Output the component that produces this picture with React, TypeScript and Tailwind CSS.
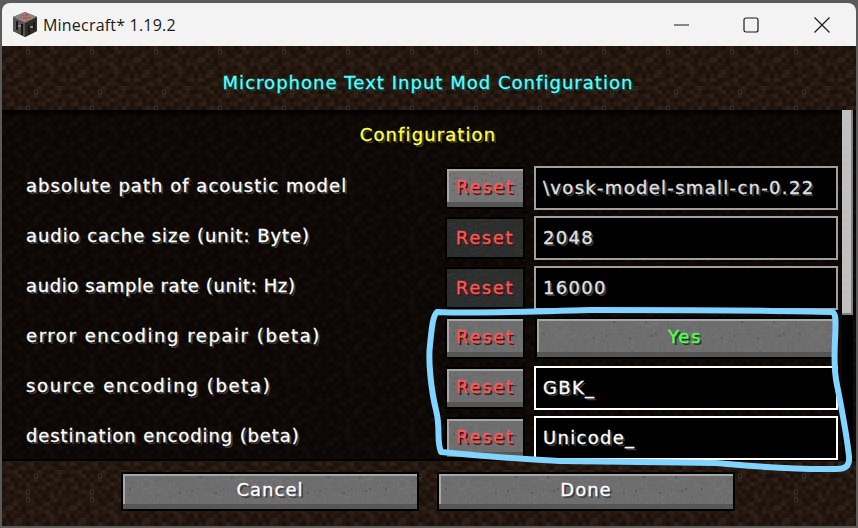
const dirtTile = [
  '1211023112013121',
  '2102213201102312',
  '0123112210231102',
  '1230201123112021',
  '2112102312201132',
  '3021120211023110',
  '1102311201213201',
  '0213210132102112',
  '1320112301121023',
  '2101231210322101',
  '1223011023110212',
  '0112302112023120',
  '2301120231201321',
  '1120213101132102',
  '0231102212301213',
  '1102321120112031',
];
const dirtColors = ['#1b110a', '#21160e', '#291b12', '#302016'];
const dirtSpecks = [[24, 4], [44, 16], [4, 12], [16, 24], [56, 40], [32, 44], [24, 60]];

// small stone speckle, generated once with a fixed seed
const stoneDots: { x: number; y: number; c: string }[] = [];
let seed = 1731;
function nextRandom() {
  seed = (seed * 25173 + 13849) % 65536;
  return seed >> 5;
}
for (let i = 0; i < 420; i++) {
  const x = (nextRandom() % 64) * 2;
  const y = (nextRandom() % 32) * 2;
  const r = nextRandom() % 24;
  stoneDots.push({ x, y, c: r === 0 ? '#565656' : r % 2 === 0 ? '#767676' : '#686868' });
}

function DirtBackground() {
  return (
    <svg className="absolute inset-0 w-full h-full" aria-hidden="true">
      <defs>
        <pattern id="dirt" width="64" height="64" patternUnits="userSpaceOnUse">
          {dirtTile.map((row, y) =>
            row.split('').map((v, x) => (
              <rect key={`${x}-${y}`} x={x * 4} y={y * 4} width="4" height="4" fill={dirtColors[Number(v)]} />
            )),
          )}
          {dirtSpecks.map(([x, y]) => (
            <g key={`${x}-${y}`}>
              <rect x={x} y={y} width="4" height="4" fill="#342d27" />
              <rect x={x + 1} y={y + 1} width="2" height="2" fill="#19130e" />
            </g>
          ))}
        </pattern>
      </defs>
      <rect width="100%" height="100%" fill="url(#dirt)" />
    </svg>
  );
}

function StoneBackground({ id, muted }: { id: string; muted?: boolean }) {
  return (
    <svg className="absolute inset-0 w-full h-full" aria-hidden="true">
      <defs>
        <pattern id={id} width="128" height="64" patternUnits="userSpaceOnUse">
          {stoneDots.map((d, i) => (
            <rect key={i} x={d.x} y={d.y} width="2" height="2" fill={d.c} />
          ))}
        </pattern>
      </defs>
      <rect width="100%" height="100%" fill={`url(#${id})`} opacity={muted ? 0.1 : 0.8} />
    </svg>
  );
}

const pixelText =
  "font-['DejaVu_Sans',sans-serif] text-[18px] leading-none whitespace-nowrap [-webkit-text-stroke:0.3px_currentColor]";

function McButton({
  id,
  className,
  children,
  disabled,
  hovered,
}: {
  id: string;
  className: string;
  children: React.ReactNode;
  disabled?: boolean;
  hovered?: boolean;
}) {
  if (disabled) {
    return (
      <div className={`relative border-2 border-black bg-[#2c2e2e] flex items-center justify-center overflow-hidden ${className}`}>
        <StoneBackground id={id} muted />
        <span className="relative flex">{children}</span>
      </div>
    );
  }
  return (
    <div
      className={`relative border-2 border-black flex items-center justify-center overflow-hidden ${
        hovered ? 'bg-[#767676]' : 'bg-[#6e6e6e]'
      } ${className}`}
    >
      <StoneBackground id={id} />
      <div className="absolute left-0 top-0 right-0 h-[2px] bg-[#a6a6a6]" />
      <div className="absolute left-0 top-0 bottom-0 w-[2px] bg-[#a6a6a6]" />
      <div className="absolute left-0 bottom-0 right-0 h-[5px] bg-[#565656]" />
      <span className="relative flex -mt-[3px]">{children}</span>
    </div>
  );
}

function ResetLabel() {
  return (
    <span className={`${pixelText} tracking-[1.6px] text-[#ff5555] [text-shadow:2px_2px_0_#3f1515]`}>Reset</span>
  );
}

function Field({ value, focused }: { value: string; focused?: boolean }) {
  return (
    <div
      className={`w-[304px] h-[44px] border-2 bg-black flex items-center pl-[7px] ${
        focused ? 'border-white' : 'border-[#a0a0a0]'
      }`}
    >
      <span
        className={`${pixelText} tracking-[1.3px] [text-shadow:2px_2px_0_#3a3a3a] ${
          focused ? 'text-white' : 'text-[#e0e0e0]'
        }`}
      >
        {value}
      </span>
    </div>
  );
}

const rows = [
  { label: 'absolute path of acoustic model', track: 'tracking-[1.03px]', value: '\\vosk-model-small-cn-0.22', hovered: true },
  { label: 'audio cache size (unit: Byte)', track: 'tracking-[0.93px]', value: '2048', disabled: true },
  { label: 'audio sample rate (unit: Hz)', track: 'tracking-[0.6px]', value: '16000', disabled: true },
  { label: 'error encoding repair (beta)', track: 'tracking-[1.57px]', toggle: true },
  { label: 'source encoding (beta)', track: 'tracking-[1.68px]', value: 'GBK_', focused: true },
  { label: 'destination encoding (beta)', track: 'tracking-[0.89px]', value: 'Unicode_', focused: true },
];

function BlockIcon() {
  return (
    <svg width="24" height="25" viewBox="0 0 24 25" aria-hidden="true" className="shrink-0">
      <path d="M12 0 L24 5 L24 19 L12 25 L0 19 L0 5 Z" fill="#3a3735" />
      <path d="M12 0 L24 5 L12 11 L0 5 Z" fill="#8a8684" />
      <path d="M0 5 L12 11 L12 25 L0 19 Z" fill="#575350" />
      <path d="M24 5 L12 11 L12 25 L24 19 Z" fill="#2f2c2a" />
      <path d="M8 3h3v1h-3zM12 2h3v2h-3zM10 5h4v2h-4zM15 5h3v1h-3zM6 5h3v1h-3zM13 8h2v1h-2z" fill="#d84343" />
      <path d="M3 9h2v9h-2zM8 12h2v11h-2zM15 13h2v9h-2zM20 10h2v8h-2z" fill="#191716" />
      <path d="M5 13h3v2h-3zM17 14h3v2h-3z" fill="#8b8785" />
    </svg>
  );
}

export default function App() {
  return (
    <div className="relative w-[858px] h-[528px] overflow-hidden bg-[#5a5a5a] pl-[2px] pt-[3px]">
      <div className="w-[854px] h-[523px] rounded-t-[8px] overflow-hidden flex flex-col">
        {/* title bar */}
        <div className="h-[43px] shrink-0 bg-[#f3f3f3] flex items-center pl-[11px]">
          <BlockIcon />
          <span className="ml-[6px] font-['Open_Sans',sans-serif] text-[16px] tracking-[0.2px] text-[#1a1a1a] whitespace-nowrap">
            Minecraft* 1.19.2
          </span>
          <div className="ml-auto flex items-center">
            <svg width="16" height="16" viewBox="0 0 16 16" className="mr-[53px]" aria-hidden="true">
              <path d="M0 8H15" stroke="#1a1a1a" strokeWidth="1" />
            </svg>
            <svg width="16" height="16" viewBox="0 0 16 16" className="mr-[55px]" aria-hidden="true">
              <rect x="1" y="1" width="14" height="14" rx="2" fill="none" stroke="#1a1a1a" strokeWidth="1.2" />
            </svg>
            <svg width="16" height="16" viewBox="0 0 16 16" className="mr-[26px]" aria-hidden="true">
              <path d="M0.5 0.5L15.5 15.5M15.5 0.5L0.5 15.5" stroke="#1a1a1a" strokeWidth="1.2" />
            </svg>
          </div>
        </div>

        <div className="relative flex-1 flex flex-col">
          <DirtBackground />

          <div className="relative h-[64px] shrink-0 flex items-center justify-center">
            <h1 className={`${pixelText} mt-[10px] mr-[2px] tracking-[1.03px] font-normal text-[#55ffff] [text-shadow:2px_2px_0_#153f3f]`}>
              Microphone Text Input Mod Configuration
            </h1>
          </div>

          {/* list */}
          <div className="relative h-[351px] shrink-0 bg-black/60 overflow-hidden flex">
            <div className="absolute left-0 right-0 top-0 h-[8px] bg-gradient-to-b from-black to-transparent" />
            <div className="absolute left-0 right-0 bottom-0 h-[2px] bg-black" />
            <div className="relative flex-1 pl-[24px] pt-[16px]">
              <h2 className={`${pixelText} text-center pr-[12px] tracking-[1.1px] font-normal text-[#ffff55] [text-shadow:2px_2px_0_#3f3f15]`}>
                Configuration
              </h2>
              <div className="mt-[22px] flex flex-col gap-[6px]">
                {rows.map((row, i) => (
                  <div key={row.label} className="h-[44px] flex items-center">
                    <span className={`${pixelText} ${row.track} w-[419px] -mt-[4px] text-white [text-shadow:2px_2px_0_#3f3f3f]`}>
                      {row.label}
                    </span>
                    <McButton
                      id={`reset-${i}`}
                      className="w-[80px] h-[42px] mr-[9px]"
                      disabled={row.disabled}
                      hovered={row.hovered}
                    >
                      <ResetLabel />
                    </McButton>
                    {row.toggle ? (
                      <McButton id="toggle" className="w-[300px] h-[42px] ml-[1px]">
                        <span className={`${pixelText} tracking-[1.6px] text-[#55ff55] [text-shadow:2px_2px_0_#153f15]`}>Yes</span>
                      </McButton>
                    ) : (
                      <Field value={row.value ?? ''} focused={row.focused} />
                    )}
                  </div>
                ))}
              </div>
            </div>
            {/* scrollbar */}
            <div className="relative w-[11px] mr-[3px] bg-black">
              <div className="h-[205px] bg-[#808080] pr-[2px] pb-[2px]">
                <div className="h-full bg-[#c0c0c0]" />
              </div>
            </div>
          </div>

          {/* footer */}
          <div className="relative flex-1 flex items-start pl-[119px] pt-[11px] gap-[18px]">
            <McButton id="cancel" className="w-[298px] h-[39px]">
              <span className={`${pixelText} tracking-[1px] text-white [text-shadow:2px_2px_0_#3f3f3f]`}>Cancel</span>
            </McButton>
            <McButton id="done" className="w-[298px] h-[39px]">
              <span className={`${pixelText} tracking-[1px] text-white [text-shadow:2px_2px_0_#3f3f3f]`}>Done</span>
            </McButton>
          </div>
        </div>
      </div>

      {/* hand-drawn annotation over the screenshot */}
      <svg className="absolute inset-0 w-[858px] h-[528px] pointer-events-none" viewBox="0 0 858 528" aria-hidden="true">
        <path
          d="M437 312 C480 314 540 311 590 310 C680 310 770 310 832 312 C836 313 836 320 835 340 C834 360 834 372 837 385 C841 405 846 430 849 456 C850 466 846 469 836 469 C790 470 750 466 715 463 C660 462 600 462 560 461 C520 459 480 456 441 452 C436 440 441 430 436 410 C431 390 428 360 430 345 C432 325 433 316 437 312 Z"
          fill="none"
          stroke="#80d4ff"
          strokeWidth="6"
          strokeLinejoin="round"
        />
      </svg>
    </div>
  );
}
